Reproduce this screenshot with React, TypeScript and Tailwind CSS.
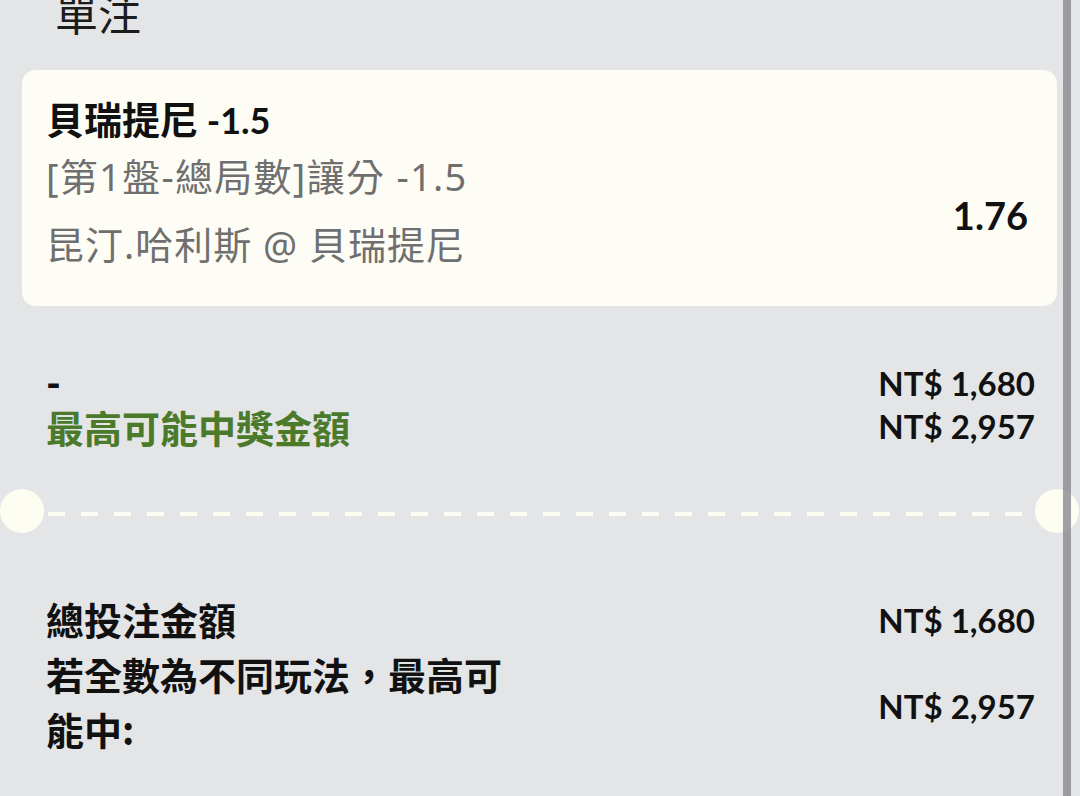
import React from "react";

const CJK = '"Noto Sans CJK TC", "Noto Sans", sans-serif';
const LATO = 'Lato, "Noto Sans CJK TC", sans-serif';
const GRAY = '"Noto Sans", "Noto Sans CJK TC", sans-serif';

export default function App() {
  return (
    <div
      className="relative w-[1080px] h-[796px] overflow-hidden bg-[#e4e5e7] text-[#111]"
      style={{ fontFamily: CJK }}
    >
      {/* Title */}
      <div className="h-[70px] pl-[55px] flex items-start">
        <div className="-mt-[9px] h-[43px] text-[43px] leading-[43px] font-normal text-[#1c1c1c]">
          單注
        </div>
      </div>

      {/* Selection card */}
      <div className="ml-[22px] w-[1035px] h-[236px] rounded-[14px] bg-[#fdfdf5] flex justify-between">
        <div className="pt-[24px] pl-[24px]">
          <div className="h-[48px] leading-[48px] whitespace-nowrap">
            <span className="text-[38px] font-bold">貝瑞提尼</span>
            <span className="text-[36px] font-bold" style={{ fontFamily: LATO }}>
              {" "}-1.5
            </span>
          </div>
          <div
            className="h-[68px] leading-[68px] text-[38px] tracking-[1.3px] text-[#6f6f6f] whitespace-nowrap"
            style={{ fontFamily: GRAY }}
          >
            [第1盤-總局數]讓分 -1.5
          </div>
          <div
            className="h-[68px] leading-[68px] text-[38px] tracking-[1px] text-[#6f6f6f] whitespace-nowrap"
            style={{ fontFamily: GRAY }}
          >
            昆汀.哈利斯 @ 貝瑞提尼
          </div>
        </div>
        <div className="pt-[125px] pr-[29px]">
          <div
            className="h-[40px] leading-[40px] text-[38px] font-bold"
            style={{ fontFamily: LATO }}
          >
            1.76
          </div>
        </div>
      </div>

      {/* Potential win */}
      <div className="mt-[56px] flex justify-between pl-[46px] pr-[45px]">
        <div>
          <div
            className="h-[43px] leading-[43px] text-[40px] font-black"
            style={{ fontFamily: LATO }}
          >
            -
          </div>
          <div className="h-[43px] leading-[43px] text-[38px] font-bold text-[#4a7a2a]">
            最高可能中獎金額
          </div>
        </div>
        <div className="text-right" style={{ fontFamily: LATO }}>
          <div className="h-[43px] leading-[43px] text-[33px] font-bold">NT$ 1,680</div>
          <div className="h-[43px] leading-[43px] text-[33px] font-bold">NT$ 2,957</div>
        </div>
      </div>

      {/* Ticket divider */}
      <div className="mt-[41px] w-[1079px] h-[44px] flex items-center gap-[4px]">
        <div className="w-[44px] h-[44px] rounded-full bg-[#fdfdf2] shrink-0" />
        <div className="flex-1 h-[4px] mt-[6px] bg-[repeating-linear-gradient(90deg,#fdfdf2_0px,#fdfdf2_17px,transparent_17px,transparent_33px)]" />
        <div className="w-[44px] h-[44px] rounded-full bg-[#fdfdf2] shrink-0" />
      </div>

      {/* Totals */}
      <div className="mt-[58px] pl-[46px] pr-[45px]">
        <div className="h-[55px] flex justify-between items-center">
          <div className="text-[38px] leading-[55px] font-bold">總投注金額</div>
          <div
            className="text-[33px] leading-[43px] font-bold pt-[4px]"
            style={{ fontFamily: LATO }}
          >
            NT$ 1,680
          </div>
        </div>
        <div className="flex justify-between items-center">
          <div className="w-[475px] text-[38px] leading-[55px] font-bold">
            若全數為不同玩法，最高可能中:
          </div>
          <div
            className="text-[33px] leading-[43px] font-bold pt-[11px]"
            style={{ fontFamily: LATO }}
          >
            NT$ 2,957
          </div>
        </div>
      </div>

      {/* Scrollbar */}
      <div className="absolute top-0 bottom-0 left-[1063px] w-[8px] bg-[#8a8a8e]/80" />
    </div>
  );
}
